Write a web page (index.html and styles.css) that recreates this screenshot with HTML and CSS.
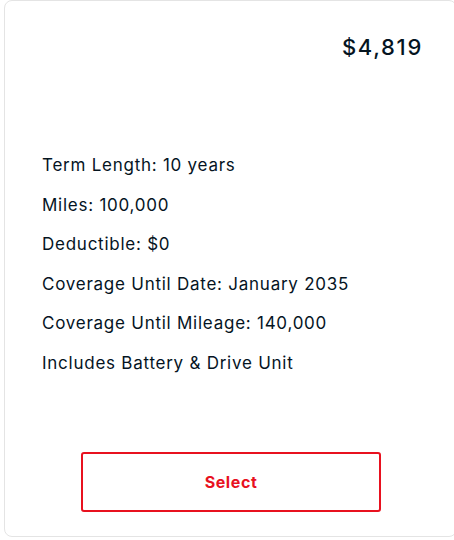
FILE: index.html
```html
<!DOCTYPE html>
<html lang="en">
<head>
<meta charset="utf-8">
<link rel="stylesheet" href="styles.css">
</head>
<body>
<div class="card">
  <div class="price-row"><span class="price">$4,819</span></div>
  <ul class="details">
    <li>Term Length: 10 years</li>
    <li>Miles: 100,000</li>
    <li>Deductible: $0</li>
    <li>Coverage Until Date: January 2035</li>
    <li>Coverage Until Mileage: 140,000</li>
    <li>Includes Battery &amp; Drive Unit</li>
  </ul>
  <div class="actions"><button class="select-btn" type="button">Select</button></div>
</div>
</body>
</html>
```

FILE: styles.css
```css
html, body {
  margin: 0;
  padding: 0;
  background: #fff;
  overflow: hidden;
}
body {
  font-family: "Inter", "Liberation Sans", sans-serif;
  color: #05141f;
}
.card {
  box-sizing: border-box;
  margin-left: 4px;
  width: 453px;
  height: 537px;
  border: 1px solid #e4e4e4;
  border-radius: 8px;
  padding: 0 36px 0 37px;
  display: flex;
  flex-direction: column;
}
.price-row {
  display: flex;
  justify-content: flex-end;
  padding-top: 33px;
}
.price {
  font-size: 22px;
  font-weight: 500;
  line-height: 26px;
  letter-spacing: 1.7px;
  margin-right: -3px;
}
.details {
  list-style: none;
  margin: 0;
  padding: 0;
  margin-top: 86px;
  display: flex;
  flex-direction: column;
}
.details li {
  font-size: 17px;
  line-height: 39.6px;
  height: 39.6px;
  letter-spacing: 0.75px;
  white-space: nowrap;
}
.actions {
  margin-top: auto;
  padding-bottom: 24px;
  display: flex;
  justify-content: center;
}
.select-btn {
  box-sizing: border-box;
  width: 300px;
  height: 60px;
  border: 2px solid #e8111f;
  border-radius: 3px;
  background: #fff;
  color: #e8111f;
  font-family: "Inter", "Liberation Sans", sans-serif;
  font-size: 16px;
  font-weight: 700;
  letter-spacing: 0.6px;
  cursor: pointer;
}
```
